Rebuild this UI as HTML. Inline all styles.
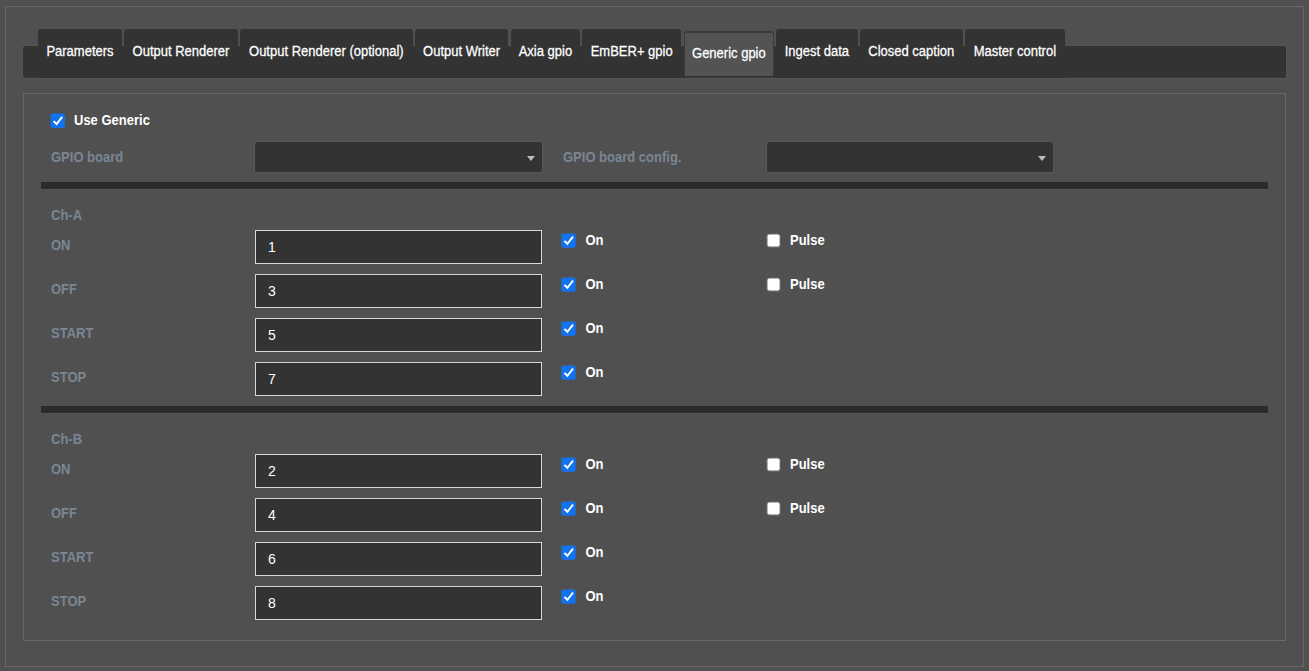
<!DOCTYPE html>
<html><head><meta charset="utf-8"><title>Generic gpio</title>
<style>
html,body{margin:0;padding:0;}
body{width:1309px;height:671px;background:#505050;font-family:"Liberation Sans",Arial,sans-serif;font-size:13px;color:#fff;position:relative;overflow:hidden;}
.abs{position:absolute;}
#frame{left:5px;top:6px;width:1297px;height:659px;border:1px solid #686868;box-sizing:content-box;}
#bar{left:23px;top:46px;width:1263px;height:32px;background:#333;border-radius:2px;box-shadow:0 0 0 1px #545454;}
.tab{position:absolute;top:29px;height:49px;background:#333;border-radius:3px 3px 0 0;text-align:center;line-height:15px;white-space:nowrap;box-sizing:border-box;padding-top:15px;color:#fff;}
.tab.active{top:31px;height:45px;background:#535353;border:1px solid #3a3a3a;border-top:2px solid #3a3a3a;border-bottom:0;border-radius:3px 3px 0 0;padding-top:13px;}
#strip{left:24px;top:77px;width:1261px;height:1px;background:#383838;}
#panel{left:23px;top:93px;width:1261px;height:546px;border:1px solid #686868;}
.lbl{position:absolute;font-weight:bold;color:#7a8694;line-height:15px;white-space:nowrap;}
.wl{position:absolute;font-weight:bold;color:#fff;line-height:15px;white-space:nowrap;}
.tab .t{display:inline-block;-webkit-text-stroke:0.25px #fff;transform:scaleY(1.07);transform-origin:0 12px;}
.lbl,.wl{transform:scaleY(1.07);transform-origin:0 12px;}
.sel{position:absolute;height:32px;background:#333;border:1px solid #575757;border-radius:3px;box-sizing:border-box;}
.sel:after{content:"";position:absolute;right:7px;top:14px;border-left:4px solid transparent;border-right:4px solid transparent;border-top:5px solid #bdbdbd;}
.hr{position:absolute;left:41px;width:1227px;height:7px;background:#2b2b2b;border-bottom:1px solid #555;}
.inp{position:absolute;left:255px;width:287px;height:34px;box-sizing:border-box;border:1px solid #d6d6d6;background:#333;color:#fff;font-size:14px;line-height:32px;padding-left:12px;}
.cb{position:absolute;width:13px;height:13px;border-radius:2px;box-sizing:border-box;}
.cb.on{background:#1173f0;}
.cb.off{background:#fff;border:1px solid #767676;}
.cb svg{position:absolute;left:0;top:0;}
</style></head><body>
<div id="frame" class="abs"></div>
<div id="bar" class="abs"></div>
<div id="strip" class="abs"></div>
<div class="tab" style="left:38px;width:84px"><span class="t">Parameters</span></div>
<div class="tab" style="left:124px;width:114px"><span class="t">Output Renderer</span></div>
<div class="tab" style="left:240px;width:172.7px"><span class="t">Output Renderer (optional)</span></div>
<div class="tab" style="left:414.7px;width:93.8px"><span class="t">Output Writer</span></div>
<div class="tab" style="left:510.5px;width:69.8px"><span class="t">Axia gpio</span></div>
<div class="tab" style="left:582.4px;width:98.6px"><span class="t">EmBER+ gpio</span></div>
<div class="tab active" style="left:683.5px;width:90.8px"><span class="t">Generic gpio</span></div>
<div class="tab" style="left:776.2px;width:81.4px"><span class="t">Ingest data</span></div>
<div class="tab" style="left:859.6px;width:103.4px"><span class="t">Closed caption</span></div>
<div class="tab" style="left:964.8px;width:100.2px"><span class="t">Master control</span></div>
<div id="panel" class="abs"></div>
<svg class="abs" style="left:50px;top:113px" width="16" height="16" viewBox="0 0 16 16"><rect x="0.60" y="0.60" width="14.3" height="14.3" rx="2.2" fill="#1173f0"/><path d="M3.60 8.10 l2.95 2.9 l5.7 -7.2" fill="none" stroke="#fff" stroke-width="1.9"/></svg>
<div class="wl" style="left:74px;top:113px">Use Generic</div>
<div class="lbl" style="left:51px;top:150px">GPIO board</div>
<div class="sel" style="left:254px;top:141px;width:289px"></div>
<div class="lbl" style="left:563px;top:150px">GPIO board config.</div>
<div class="sel" style="left:766px;top:141px;width:288px"></div>
<div class="hr" style="top:182px"></div>
<div class="lbl" style="left:51px;top:208px">Ch-A</div>
<div class="lbl" style="left:51px;top:238px">ON</div>
<div class="inp" style="top:230px">1</div>
<svg class="abs" style="left:561px;top:233px" width="16" height="16" viewBox="0 0 16 16"><rect x="0.40" y="0.40" width="14.3" height="14.3" rx="2.2" fill="#1173f0"/><path d="M3.40 7.90 l2.95 2.9 l5.7 -7.2" fill="none" stroke="#fff" stroke-width="1.9"/></svg>
<div class="wl" style="left:585.5px;top:233px">On</div>
<svg class="abs" style="left:766px;top:233px" width="16" height="16" viewBox="0 0 16 16"><rect x="0.40" y="0.40" width="14.3" height="14.3" rx="2.6" fill="#6a6a6a"/><rect x="1.50" y="1.50" width="12.1" height="12.1" rx="1.8" fill="#fff"/></svg>
<div class="wl" style="left:790px;top:233px">Pulse</div>
<div class="lbl" style="left:51px;top:282px">OFF</div>
<div class="inp" style="top:274px">3</div>
<svg class="abs" style="left:561px;top:277px" width="16" height="16" viewBox="0 0 16 16"><rect x="0.40" y="0.40" width="14.3" height="14.3" rx="2.2" fill="#1173f0"/><path d="M3.40 7.90 l2.95 2.9 l5.7 -7.2" fill="none" stroke="#fff" stroke-width="1.9"/></svg>
<div class="wl" style="left:585.5px;top:277px">On</div>
<svg class="abs" style="left:766px;top:277px" width="16" height="16" viewBox="0 0 16 16"><rect x="0.40" y="0.40" width="14.3" height="14.3" rx="2.6" fill="#6a6a6a"/><rect x="1.50" y="1.50" width="12.1" height="12.1" rx="1.8" fill="#fff"/></svg>
<div class="wl" style="left:790px;top:277px">Pulse</div>
<div class="lbl" style="left:51px;top:326px">START</div>
<div class="inp" style="top:318px">5</div>
<svg class="abs" style="left:561px;top:321px" width="16" height="16" viewBox="0 0 16 16"><rect x="0.40" y="0.40" width="14.3" height="14.3" rx="2.2" fill="#1173f0"/><path d="M3.40 7.90 l2.95 2.9 l5.7 -7.2" fill="none" stroke="#fff" stroke-width="1.9"/></svg>
<div class="wl" style="left:585.5px;top:321px">On</div>
<div class="lbl" style="left:51px;top:370px">STOP</div>
<div class="inp" style="top:362px">7</div>
<svg class="abs" style="left:561px;top:365px" width="16" height="16" viewBox="0 0 16 16"><rect x="0.40" y="0.40" width="14.3" height="14.3" rx="2.2" fill="#1173f0"/><path d="M3.40 7.90 l2.95 2.9 l5.7 -7.2" fill="none" stroke="#fff" stroke-width="1.9"/></svg>
<div class="wl" style="left:585.5px;top:365px">On</div>
<div class="hr" style="top:406px"></div>
<div class="lbl" style="left:51px;top:432px">Ch-B</div>
<div class="lbl" style="left:51px;top:462px">ON</div>
<div class="inp" style="top:454px">2</div>
<svg class="abs" style="left:561px;top:457px" width="16" height="16" viewBox="0 0 16 16"><rect x="0.40" y="0.40" width="14.3" height="14.3" rx="2.2" fill="#1173f0"/><path d="M3.40 7.90 l2.95 2.9 l5.7 -7.2" fill="none" stroke="#fff" stroke-width="1.9"/></svg>
<div class="wl" style="left:585.5px;top:457px">On</div>
<svg class="abs" style="left:766px;top:457px" width="16" height="16" viewBox="0 0 16 16"><rect x="0.40" y="0.40" width="14.3" height="14.3" rx="2.6" fill="#6a6a6a"/><rect x="1.50" y="1.50" width="12.1" height="12.1" rx="1.8" fill="#fff"/></svg>
<div class="wl" style="left:790px;top:457px">Pulse</div>
<div class="lbl" style="left:51px;top:506px">OFF</div>
<div class="inp" style="top:498px">4</div>
<svg class="abs" style="left:561px;top:501px" width="16" height="16" viewBox="0 0 16 16"><rect x="0.40" y="0.40" width="14.3" height="14.3" rx="2.2" fill="#1173f0"/><path d="M3.40 7.90 l2.95 2.9 l5.7 -7.2" fill="none" stroke="#fff" stroke-width="1.9"/></svg>
<div class="wl" style="left:585.5px;top:501px">On</div>
<svg class="abs" style="left:766px;top:501px" width="16" height="16" viewBox="0 0 16 16"><rect x="0.40" y="0.40" width="14.3" height="14.3" rx="2.6" fill="#6a6a6a"/><rect x="1.50" y="1.50" width="12.1" height="12.1" rx="1.8" fill="#fff"/></svg>
<div class="wl" style="left:790px;top:501px">Pulse</div>
<div class="lbl" style="left:51px;top:550px">START</div>
<div class="inp" style="top:542px">6</div>
<svg class="abs" style="left:561px;top:545px" width="16" height="16" viewBox="0 0 16 16"><rect x="0.40" y="0.40" width="14.3" height="14.3" rx="2.2" fill="#1173f0"/><path d="M3.40 7.90 l2.95 2.9 l5.7 -7.2" fill="none" stroke="#fff" stroke-width="1.9"/></svg>
<div class="wl" style="left:585.5px;top:545px">On</div>
<div class="lbl" style="left:51px;top:594px">STOP</div>
<div class="inp" style="top:586px">8</div>
<svg class="abs" style="left:561px;top:589px" width="16" height="16" viewBox="0 0 16 16"><rect x="0.40" y="0.40" width="14.3" height="14.3" rx="2.2" fill="#1173f0"/><path d="M3.40 7.90 l2.95 2.9 l5.7 -7.2" fill="none" stroke="#fff" stroke-width="1.9"/></svg>
<div class="wl" style="left:585.5px;top:589px">On</div>
</body></html>
